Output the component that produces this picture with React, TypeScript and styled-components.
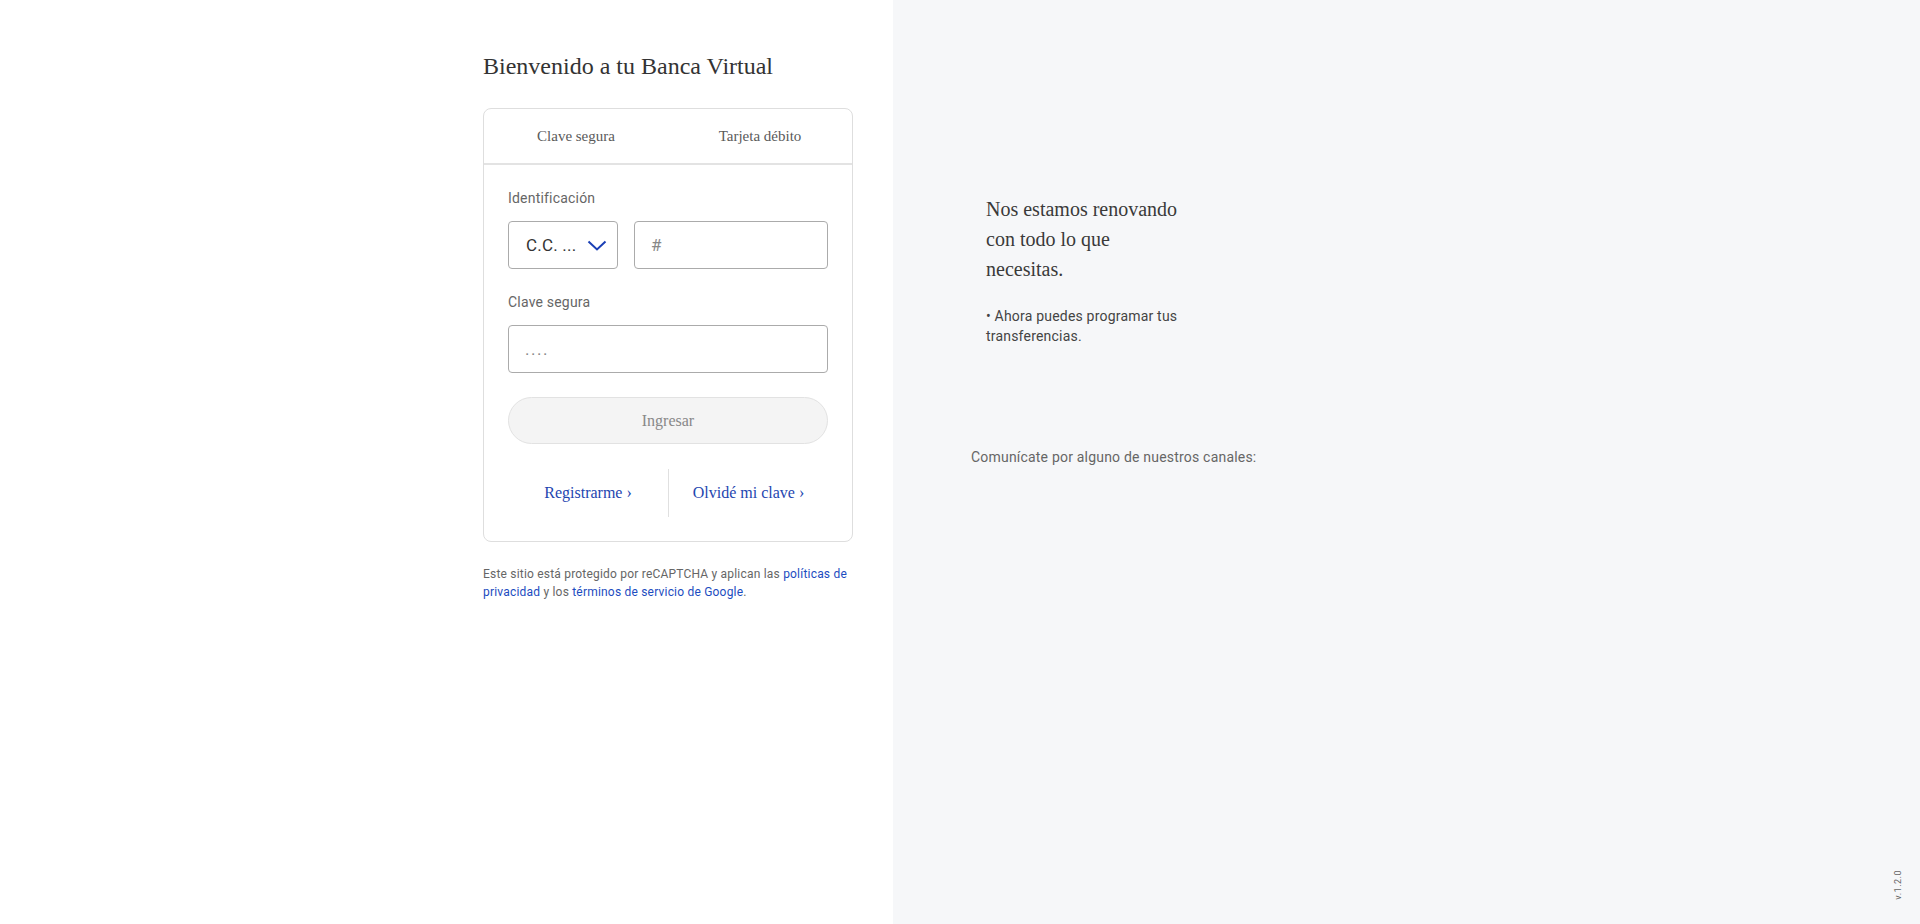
import React from "react";
import styled, { createGlobalStyle } from "styled-components";

const Global = createGlobalStyle`
  html, body { margin: 0; padding: 0; }
  body { font-family: Roboto, "Liberation Sans", sans-serif; background: #fff; letter-spacing: 0.2px; }
  * { box-sizing: border-box; }
`;

const Page = styled.div`
  display: flex;
  width: 100%;
  height: 924px;
  overflow: hidden;
`;

const LeftPanel = styled.section`
  flex: 0 0 893px;
  display: flex;
  justify-content: flex-end;
  padding: 52px 40px 0 0;
  background: #ffffff;
`;

const Column = styled.div`
  width: 370px;
  display: flex;
  flex-direction: column;
`;

const Title = styled.h1`
  margin: 0 0 28px;
  font-family: "Liberation Serif", "Times New Roman", serif;
  font-weight: 400;
  font-size: 24px;
  line-height: 28px;
  letter-spacing: 0;
  color: #333;
`;

const Card = styled.div`
  border: 1px solid #dedede;
  border-radius: 8px;
  background: #fff;
`;

const Tabs = styled.div`
  display: grid;
  grid-template-columns: 1fr 1fr;
  height: 56px;
  border-bottom: 2px solid #e3e3e3;
`;

const Tab = styled.button`
  border: 0;
  background: transparent;
  font-family: "Liberation Serif", "Times New Roman", serif;
  font-size: 15px;
  letter-spacing: 0;
  color: #5a5a5a;
  padding: 0;
  cursor: pointer;
`;

const Body = styled.div`
  padding: 23px 24px 24px;
  display: flex;
  flex-direction: column;
`;

const Label = styled.label`
  font-size: 14px;
  line-height: 20px;
  color: #666;
  margin-bottom: 13px;
`;

const Row = styled.div`
  display: flex;
  gap: 16px;
  margin-bottom: 23px;
`;

const SelectBox = styled.div`
  flex: 0 0 110px;
  height: 48px;
  border: 1px solid #ababab;
  border-radius: 4px;
  display: flex;
  align-items: center;
  justify-content: space-between;
  padding: 0 10px 0 17px;
  font-size: 17px;
  color: #333;
`;

const Field = styled.input<{ $dots?: boolean }>`
  flex: 1;
  width: 100%;
  height: 48px;
  border: 1px solid #ababab;
  border-radius: 4px;
  padding: 0 16px;
  font-family: Roboto, "Liberation Sans", sans-serif;
  font-size: 17px;
  color: #333;
  outline: none;
  &::placeholder {
    color: #888;
    letter-spacing: ${(p) => (p.$dots ? "1.5px" : "0")};
  }
`;

const PasswordWrap = styled.div`
  margin-bottom: 24px;
  display: flex;
`;

const Submit = styled.button`
  height: 47px;
  width: 100%;
  border-radius: 24px;
  border: 1px solid #e2e2e2;
  background: #f4f4f4;
  font-family: "Liberation Serif", "Times New Roman", serif;
  font-size: 16px;
  letter-spacing: 0;
  color: #888;
  margin-bottom: 25px;
`;

const Links = styled.div`
  display: grid;
  grid-template-columns: 1fr 1fr;
  height: 48px;
`;

const LinkCell = styled.a<{ $divider?: boolean }>`
  display: flex;
  align-items: center;
  justify-content: center;
  border-left: ${(p) => (p.$divider ? "1px solid #e0e0e0" : "0")};
  font-family: "Liberation Serif", "Times New Roman", serif;
  font-size: 16px;
  letter-spacing: 0;
  color: #1e46b0;
  text-decoration: none;
`;

const Note = styled.p`
  margin: 23px 0 0;
  font-size: 12px;
  line-height: 18px;
  color: #666;
`;

const NoteLink = styled.a`
  color: #1c4cc0;
  text-decoration: none;
`;

const RightPanel = styled.section`
  position: relative;
  flex: 1;
  background: #f6f7f9;
  padding: 194px 0 0 78px;
`;

const Promo = styled.div`
  width: 200px;
  margin-left: 15px;
`;

const PromoTitle = styled.h2`
  margin: 0 0 22px;
  font-family: "Liberation Serif", "Times New Roman", serif;
  font-weight: 400;
  font-size: 20px;
  line-height: 30px;
  letter-spacing: 0;
  color: #3a3a3a;
`;

const PromoText = styled.p`
  margin: 0;
  font-size: 14px;
  line-height: 20px;
  color: #444;
`;

const Channels = styled.p`
  margin: 101px 0 0;
  font-size: 14px;
  line-height: 20px;
  color: #666;
`;

const Version = styled.span`
  position: absolute;
  right: 17px;
  bottom: 24px;
  writing-mode: vertical-rl;
  transform: rotate(180deg);
  font-size: 9px;
  letter-spacing: 0.5px;
  color: #666;
`;

const Chevron = () => (
  <svg width="20" height="11" viewBox="0 0 20 11" fill="none">
    <path d="M1.5 1.5 L10 9.5 L18.5 1.5" stroke="#1a3fb5" strokeWidth="2" />
  </svg>
);

export default function App() {
  return (
    <>
      <Global />
      <Page>
        <LeftPanel>
          <Column>
            <Title>Bienvenido a tu Banca Virtual</Title>
            <Card>
              <Tabs>
                <Tab>Clave segura</Tab>
                <Tab>Tarjeta débito</Tab>
              </Tabs>
              <Body>
                <Label>Identificación</Label>
                <Row>
                  <SelectBox>
                    <span>C.C. ...</span>
                    <Chevron />
                  </SelectBox>
                  <Field placeholder="#" />
                </Row>
                <Label>Clave segura</Label>
                <PasswordWrap>
                  <Field $dots placeholder="...." />
                </PasswordWrap>
                <Submit>Ingresar</Submit>
                <Links>
                  <LinkCell href="#">Registrarme ›</LinkCell>
                  <LinkCell href="#" $divider>
                    Olvidé mi clave ›
                  </LinkCell>
                </Links>
              </Body>
            </Card>
            <Note>
              Este sitio está protegido por reCAPTCHA y aplican las{" "}
              <NoteLink href="#">políticas de privacidad</NoteLink> y los{" "}
              <NoteLink href="#">términos de servicio de Google</NoteLink>.
            </Note>
          </Column>
        </LeftPanel>
        <RightPanel>
          <Promo>
            <PromoTitle>Nos estamos renovando con todo lo que necesitas.</PromoTitle>
            <PromoText>• Ahora puedes programar tus transferencias.</PromoText>
          </Promo>
          <Channels>Comunícate por alguno de nuestros canales:</Channels>
          <Version>v.1.2.0</Version>
        </RightPanel>
      </Page>
    </>
  );
}
